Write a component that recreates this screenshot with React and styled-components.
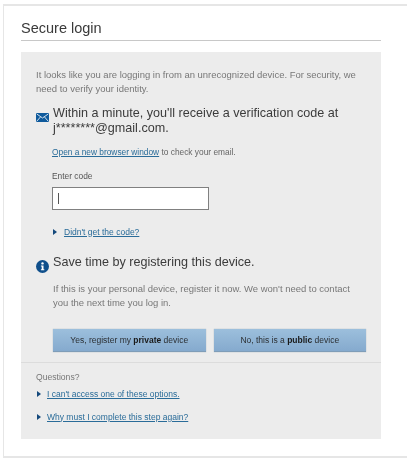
import React from 'react';
import styled, { createGlobalStyle } from 'styled-components';

const Global = createGlobalStyle`
  html, body { margin: 0; padding: 0; background: #fff; }
  body { font-family: "Liberation Sans", Arial, sans-serif; }
`;

const Frame = styled.div`
  box-sizing: border-box;
  width: 404px;
  height: 454px;
  margin: 4px 0 0 3px;
  padding: 12px 0 0 17px;
  border: solid #e6e6e6;
  border-width: 2px 0 2px 1px;
  filter: blur(0.3px);
`;

const Title = styled.h1`
  width: 360px;
  height: 22px;
  margin: 0 0 10.5px;
  border-bottom: 1.5px solid #c8c8c8;
  font-size: 14.5px;
  line-height: 20px;
  font-weight: 400;
  color: #3a3a3a;
`;

const Panel = styled.div`
  box-sizing: border-box;
  width: 360px;
  height: 387px;
  background: #ececec;
`;

const Main = styled.div`
  padding: 16px 15px 10px;
`;

const Muted = styled.p`
  margin: ${p => p.$top || 0}px 0 0 ${p => p.$indent || 0}px;
  font-size: 9.48px;
  line-height: 14px;
  color: #777;
`;

const Questions = styled(Muted)`
  font-size: 8.6px;
`;

const NoticeRow = styled.div`
  display: flex;
  align-items: flex-start;
  margin-top: ${p => p.$top}px;
`;

const IconSlot = styled.div`
  box-sizing: border-box;
  flex: 0 0 17px;
  height: 15px;
  padding-top: ${p => p.$top}px;
  svg { display: block; }
`;

const Heading = styled.h2`
  margin: 0;
  font-size: 12.6px;
  line-height: 15px;
  font-weight: 400;
  color: #3b3b3b;
`;

const Indented = styled.div`
  padding-left: 16px;
`;

const Note = styled.p`
  margin: 10px 0 0;
  font-size: 8.35px;
  line-height: 12px;
  color: #666;
`;

const Link = styled.a`
  color: #2a6c99;
  text-decoration: underline;
`;

const Label = styled.label`
  display: block;
  margin-top: 12px;
  font-size: 8.4px;
  line-height: 12px;
  color: #555;
`;

const CodeInput = styled.div`
  box-sizing: border-box;
  width: 157px;
  height: 23px;
  margin-top: 5px;
  padding: 5px 5px;
  border: 1px solid #808080;
  background: #fff;
`;

const Caret = styled.div`
  width: 1px;
  height: 11px;
  background: #555;
`;

const Disclosure = styled.div`
  display: flex;
  align-items: center;
  gap: ${p => p.$gap}px;
  margin-top: ${p => p.$top}px;
  font-size: ${p => p.$size}px;
  line-height: 12px;
`;

const Arrow = styled.span`
  width: 0;
  height: 0;
  margin-left: 1px;
  border-left: 4px solid #14497c;
  border-top: 3.5px solid transparent;
  border-bottom: 3.5px solid transparent;
`;

const Buttons = styled.div`
  display: flex;
  gap: 8px;
  margin: 19px 0 0 1px;
`;

const Button = styled.button`
  box-sizing: border-box;
  width: 153px;
  height: 23px;
  padding: 0;
  border: 0;
  border-bottom: 1px solid #7f9db8;
  box-shadow: 0 0 1px #9aa9b5;
  background: linear-gradient(#9cbfdc, #85aace);
  font-family: inherit;
  font-size: 8.5px;
  color: #2b2f33;
  b { color: #1a1a1a; }
`;

const Help = styled.div`
  border-top: 1px solid #dcdcdc;
  padding: 7px 15px 0;
`;

const Mail = () => (
  <svg width="13" height="9" viewBox="0 0 13 9">
    <rect width="13" height="9" rx="1" fill="#0f5a9c" />
    <path d="M0.8 1 L6.5 5 L12.2 1 M0.8 8.2 L4.6 3.8 M12.2 8.2 L8.4 3.8" fill="none" stroke="#e6eef5" strokeWidth="0.9" />
  </svg>
);

const Info = () => (
  <svg width="13" height="13" viewBox="0 0 13 13">
    <circle cx="6.5" cy="6.5" r="6.5" fill="#0f4f8b" />
    <circle cx="6.5" cy="3.4" r="1.2" fill="#fff" />
    <path d="M4.9 5.4 H7.5 V9.3 H8.3 V10.3 H4.9 V9.3 H5.7 V6.4 H4.9 Z" fill="#fff" />
  </svg>
);

export default function App() {
  return (
    <>
      <Global />
      <Frame>
        <Title>Secure login</Title>
        <Panel>
          <Main>
            <Muted>
              It looks like you are logging in from an unrecognized device. For security, we
              <br />
              need to verify your identity.
            </Muted>
            <NoticeRow $top={10}>
              <IconSlot $top={7.5}><Mail /></IconSlot>
              <Heading>
                Within a minute, you'll receive a verification code at
                <br />
                j********@gmail.com.
              </Heading>
            </NoticeRow>
            <Indented>
              <Note><Link>Open a new browser window</Link> to check your email.</Note>
              <Label>Enter code</Label>
              <CodeInput><Caret /></CodeInput>
              <Disclosure $top={16} $gap={7} $size={8.5}>
                <Arrow />
                <Link>Didn't get the code?</Link>
              </Disclosure>
            </Indented>
            <NoticeRow $top={17.5}>
              <IconSlot $top={4.5}><Info /></IconSlot>
              <Heading>Save time by registering this device.</Heading>
            </NoticeRow>
            <Indented>
              <Muted $top={11.5} $indent={1}>
                If this is your personal device, register it now. We won't need to contact
                <br />
                you the next time you log in.
              </Muted>
              <Buttons>
                <Button>Yes, register my <b>private</b> device</Button>
                <Button>No, this is a <b>public</b> device</Button>
              </Buttons>
            </Indented>
          </Main>
          <Help>
            <Questions>Questions?</Questions>
            <Disclosure $top={4} $gap={6} $size={8.5}>
              <Arrow />
              <Link>I can't access one of these options.</Link>
            </Disclosure>
            <Disclosure $top={11} $gap={6} $size={8.5}>
              <Arrow />
              <Link>Why must I complete this step again?</Link>
            </Disclosure>
          </Help>
        </Panel>
      </Frame>
    </>
  );
}
